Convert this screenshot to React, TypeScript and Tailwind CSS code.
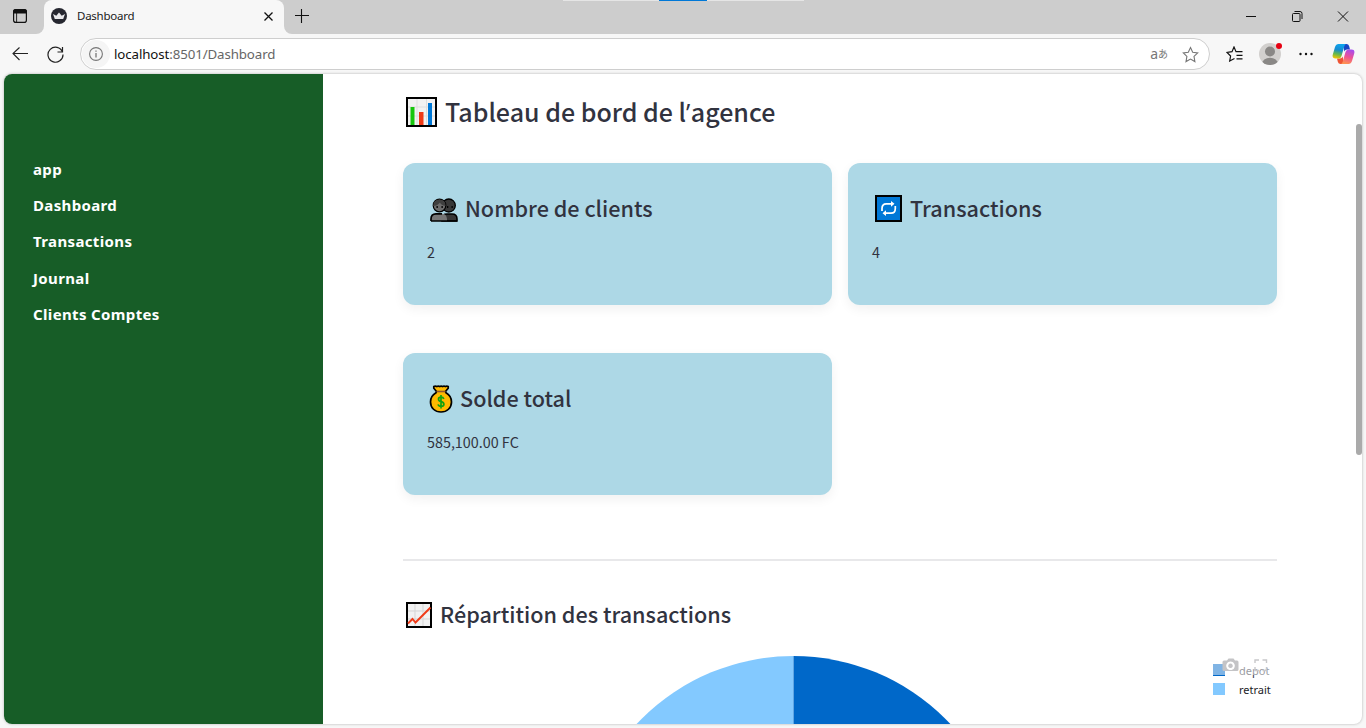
import React from "react";

const PAGES = ["app", "Dashboard", "Transactions", "Journal", "Clients Comptes"];

function BarChartEmoji() {
  return (
    <svg width="31" height="30" viewBox="0 0 31 30" className="shrink-0">
      <rect x="1" y="1" width="29" height="28" fill="#f2f2f2" stroke="#000" strokeWidth="2" />
      <path d="M11 2v26M20.500 2v26M2 10h27M2 19h27" stroke="#dedede" strokeWidth="1" />
      <path d="M4.500 10h4v18h-4z" fill="#16c60c" />
      <path d="M13 15h4.500v13h-4.500z" fill="#f03a17" />
      <path d="M22 6h4v22h-4z" fill="#0078d7" />
    </svg>
  );
}

function PeopleEmoji() {
  return (
    <svg width="28" height="24" viewBox="0 0 28 24" className="mt-[3px] shrink-0">
      <path d="M12 23v-2q0-5 5-5h5q5 0 5 5v2z" fill="#383838" stroke="#000" strokeWidth="1.600" />
      <circle cx="18.800" cy="7.500" r="6.500" fill="#383838" stroke="#000" strokeWidth="1.300" />
      <path d="M1 23v-2q0-5.200 5-5.200h6q4.500 0 5 5.200v2z" fill="#767676" />
      <path d="M1 23v-2q0-5.200 5-5.200h6M1 23h26" fill="none" stroke="#000" strokeWidth="1.700" />
      <circle cx="9.500" cy="7.500" r="6.300" fill="#6b6b6b" stroke="#000" strokeWidth="1.200" />
      <path d="M3.200 8q0-6.500 6.300-6.500t6.100 6.500Q11 7 10 4.500 7 8 3.200 8z" fill="#3f3f3f" />
      <path d="M6.500 8h1.300v2H6.500zM11.500 8h1.300v2h-1.300zM17 8h1.300v2H17zM21.500 8h1.300v2h-1.300z" fill="#000" />
    </svg>
  );
}

function RepeatEmoji() {
  return (
    <svg width="27" height="27" viewBox="0 0 27 27" className="shrink-0">
      <rect x="1" y="1" width="25" height="25" fill="#0078d7" stroke="#000" strokeWidth="2" />
      <g fill="none" stroke="#fff" strokeWidth="1.700">
        <path d="M7 16v-2.500q0-4.700 4.300-4.700H17" />
        <path d="M20.300 11v2.500q0 4.700-4.300 4.700H10" />
      </g>
      <path d="M16 6l3.500 2.800-3.500 2.900zM11 15.300L7.500 18.200l3.500 2.900z" fill="#fff" />
    </svg>
  );
}

function MoneyEmoji() {
  return (
    <svg width="24" height="28" viewBox="0 0 24 28" className="mt-[2px] shrink-0">
      <path
        d="M7.500 6.500L4.800 3.200V1.500q1.500-.7 3 0 1.500-.7 3 0 1.300-.7 2.700 0 1.500-.7 3 0 1.300-.7 2.700 0v1.700L16.500 6.500l.5 1.300Q22.500 11 22.500 17c0 6-4.500 10-10.500 10S1.500 23 1.500 17Q1.500 11 7 7.800z"
        fill="#ffb900" stroke="#000" strokeWidth="1.700"
      />
      <path d="M7.500 6.500h9" stroke="#8e562e" strokeWidth="1.600" />
      <path d="M14.800 14q-.5-1.800-2.800-1.800-2.500 0-2.500 2 0 1.700 2.600 2.400 2.800.7 2.800 2.700 0 2.100-2.800 2.100-2.500 0-3-2M12 10v13.500" fill="none" stroke="#13a10e" strokeWidth="1.700" />
    </svg>
  );
}

function TrendEmoji() {
  return (
    <svg width="26" height="26" viewBox="0 0 26 26" className="mt-[2px] shrink-0">
      <rect x="1" y="1" width="24" height="24" fill="#f2f2f2" stroke="#000" strokeWidth="2" />
      <path d="M9 2v22M17 2v22M2 9h22M2 17h22" stroke="#d5d5d5" />
      <path d="M2 21.500L6.500 17l3 3.500L24.500 5.500" fill="none" stroke="#f03a17" strokeWidth="1.900" />
    </svg>
  );
}

function CopilotLogo() {
  return (
    <svg width="23" height="22" viewBox="0 0 23 22">
      <defs>
        <linearGradient id="cpA" x1="0.500" y1="0" x2="0.300" y2="1">
          <stop offset="0" stopColor="#0ea5ee" />
          <stop offset="0.400" stopColor="#168bd0" />
          <stop offset="0.700" stopColor="#65b84c" />
          <stop offset="1" stopColor="#f5c400" />
        </linearGradient>
        <linearGradient id="cpB" x1="0.700" y1="0" x2="0.400" y2="1">
          <stop offset="0" stopColor="#a64bf0" />
          <stop offset="0.500" stopColor="#ec5197" />
          <stop offset="1" stopColor="#ff9350" />
        </linearGradient>
      </defs>
      <path d="M11 1h3.500q2 0 2.600 2L18 6.500h-3q-2 0-2.600 2z" fill="#1946c4" />
      <path d="M12 21H8.500q-2 0-2.600-2L5 15.500h3q2 0 2.600-2z" fill="#ee5434" />
      <path d="M6.500 1H14q-1.200.5-1.700 2.200L9.500 13q-.7 2.500-3 2.500H3.500Q-.2 15.500.8 11.500L3 4q1-3 3.500-3z" fill="url(#cpA)" />
      <path d="M16.500 21H9q1.200-.5 1.700-2.200L13.500 9q.7-2.500 3-2.500h3q3.700 0 2.700 4L20 18q-1 3-3.500 3z" fill="url(#cpB)" />
    </svg>
  );
}

function StarPath() {
  return <path d="M8.500 1.500l2.200 4.700 5 .7-3.700 3.500.9 5.200-4.400-2.500-4.500 2.500.9-5.200L1.300 6.900l5-.7z" />;
}

function TitleBar() {
  return (
    <header className="flex h-[34px] shrink-0 bg-[#f7f7f7]">
      <div className="flex w-11 items-start rounded-br-lg bg-[#cdcdcd] pt-[9px] pl-[13px]">
        <svg width="14" height="14" viewBox="0 0 14 14" fill="none" stroke="#111" strokeWidth="1.200">
          <rect x="0.600" y="0.600" width="12.800" height="12.800" rx="2.200" />
          <path d="M.6 4V3Q.6.600 3 .600h8q2.400 0 2.400 2.400v1z" fill="#111" />
          <path d="M3.600 4v9.500" strokeWidth="0.900" />
        </svg>
      </div>
      <div className="w-60 bg-[#cdcdcd]">
        <div className="flex h-full items-start rounded-t-lg bg-[#f7f7f7] pr-[11px] pl-[7px]">
          <svg className="mt-2" width="16" height="16" viewBox="0 0 16 16">
            <circle cx="8" cy="8" r="8" fill="#262730" />
            <path d="M2 6l3.300 1.800L8 4.500l2.700 3.300L14 6l-1.800 5H3.800z" fill="#e9e9ec" />
          </svg>
          <span className="mt-[7px] ml-[10px] flex-1 font-['Noto_Sans',sans-serif] text-[11.500px] leading-[18px] tracking-[-0.250px] text-[#1b1b1b]">Dashboard</span>
          <svg className="mt-3" width="9" height="9" viewBox="0 0 9 9" stroke="#111" strokeWidth="1.300">
            <path d="M.5.500l8 8M8.500.500l-8 8" />
          </svg>
        </div>
      </div>
      <div className="flex flex-1 items-start rounded-bl-lg bg-[#cdcdcd]">
        <svg className="mt-[9px] ml-[11px]" width="14" height="14" viewBox="0 0 14 14" stroke="#111" strokeWidth="1.100">
          <path d="M0 6.500h14M6.500 0v14" />
        </svg>
        <div className="ml-[254px] flex h-px w-[241px] bg-[#e5e5e5]">
          <div className="ml-24 h-px w-12 bg-[#0078d7]" />
        </div>
        <div className="ml-auto flex pt-[11px] pr-[17px]">
          <svg className="mr-[35px]" width="11" height="11" viewBox="0 0 11 11" stroke="#111"><path d="M0 5.500h10" /></svg>
          <svg className="mr-[34px]" width="11" height="11" viewBox="0 0 11 11" fill="none" stroke="#111">
            <rect x="0.500" y="2.500" width="7.500" height="8" rx="1" />
            <path d="M2.500.500h5.500q2 0 2 2V8" />
          </svg>
          <svg width="12" height="11" viewBox="0 0 12 11" stroke="#111"><path d="M1 .500l10 10M11 .500l-10 10" /></svg>
        </div>
      </div>
    </header>
  );
}

function AddressBar() {
  return (
    <div className="flex h-10 shrink-0 items-center bg-[#f7f7f7] pl-3">
      <svg width="16" height="14" viewBox="0 0 16 14" fill="none" stroke="#222" strokeWidth="1.100">
        <path d="M16 6.500H.8M7.500.500L1 6.500l6.500 6.500" />
      </svg>
      <svg className="ml-[19px]" width="17" height="17" viewBox="0 0 17 17" fill="none" stroke="#222" strokeWidth="1.200">
        <path d="M15.500 6A7.500 7.500 0 1 0 16 8.500M15.500 1v5H10.500" />
      </svg>
      <div className="ml-4 flex h-8 w-[1130px] items-center rounded-full border border-[#cecece] bg-white pr-[10px] pl-px">
        <div className="flex size-7 items-center justify-center rounded-full bg-[#f5f5f5]">
          <svg width="14" height="14" viewBox="0 0 14 14" fill="none" stroke="#777" strokeWidth="1.100">
            <circle cx="7" cy="7" r="6.400" />
            <path d="M7 6v4.500M7 3.400v1.300" strokeWidth="1.300" />
          </svg>
        </div>
        <span className="ml-1 font-['Noto_Sans',sans-serif] text-[13.300px] leading-5 tracking-[-0.110px] text-[#666]">
          <span className="text-[#111]">localhost</span>:8501/Dashboard
        </span>
        <span className="ml-auto flex items-center text-[#777]">
          <span className="font-['Noto_Sans',sans-serif] text-[14px] leading-4">a</span>
          <span className="font-['Noto_Sans_CJK_JP',sans-serif] text-[10px] leading-4">あ</span>
        </span>
        <svg className="ml-[14px]" width="17" height="17" viewBox="0 0 17 17" fill="none" stroke="#777" strokeWidth="1.100"><StarPath /></svg>
      </div>
      <svg className="ml-4" width="17" height="16" viewBox="0 0 17 16" fill="none" stroke="#111" strokeWidth="1.200">
        <path d="M8.500 12.500l-4.800 2.500.9-5L1 6.500l5-.8L8 1l2 4.700h6.500M10.500 9.300h6M10.500 12.800h6" />
      </svg>
      <div className="relative ml-4 size-[22px]">
        <svg width="22" height="22" viewBox="0 0 22 22">
          <defs><clipPath id="avatarClip"><circle cx="11" cy="11" r="11" /></clipPath></defs>
          <g clipPath="url(#avatarClip)">
            <rect width="22" height="22" fill="#d2d0ce" />
            <circle cx="11" cy="8.500" r="5" fill="#8a8886" />
            <ellipse cx="11" cy="21" rx="8" ry="6.300" fill="#8a8886" />
          </g>
        </svg>
        <span className="absolute top-0 right-[-1px] size-1.5 rounded-full bg-[#e60012]" />
      </div>
      <svg className="ml-[18px]" width="14" height="4" viewBox="0 0 14 4" fill="#111">
        <circle cx="1.500" cy="2" r="1.200" /><circle cx="7" cy="2" r="1.200" /><circle cx="12.500" cy="2" r="1.200" />
      </svg>
      <div className="ml-[19px]"><CopilotLogo /></div>
    </div>
  );
}

type StatCardProps = { icon: React.ReactNode; title: string; value: string; iconBox: string };

function StatCard({ icon, title, value, iconBox }: StatCardProps) {
  return (
    <section className="h-[142px] rounded-xl bg-[#add8e6] px-6 pt-[22px] shadow-[0_4px_12px_rgba(0,0,0,0.06)]">
      <h3 className={`flex h-[46px] items-center whitespace-nowrap font-['Noto_Sans_CJK_SC',sans-serif] text-[21.600px] font-medium ${iconBox}`}>
        {icon}
        <span className="leading-[30px]">{title}</span>
      </h3>
      <p className="mt-[9px] font-['Noto_Sans_CJK_SC',sans-serif] text-[14.350px] leading-6">{value}</p>
    </section>
  );
}

function PieChart() {
  return (
    <div className="mt-[24px] flex h-[70px] items-start justify-between">
      <svg className="ml-[233px]" width="318" height="70" viewBox="0 0 318 70">
        <path d="M157.500 215V0A215 215 0 0 0 157.500 430z" fill="#83c9ff" />
        <path d="M157.500 215V0A215 215 0 0 1 157.500 430z" fill="#0068c9" />
      </svg>
      <div className="relative mt-[4px] mr-[6px] flex w-[58px] flex-col font-['Noto_Sans',sans-serif] text-[11px] text-[#31333f]">
        <div className="flex h-[19px] items-center">
          <span className="size-3 bg-[#0068c9]" />
          <span className="mt-[3px] ml-[14px]">depot</span>
        </div>
        <div className="flex h-[19px] items-center text-[#1b1c26]">
          <span className="size-3 bg-[#83c9ff]" />
          <span className="mt-[3px] ml-[14px]">retrait</span>
        </div>
        <div className="absolute top-[-5px] left-0 h-5 w-[62px] bg-white/50">
          <svg width="62" height="20" viewBox="0 0 62 20">
            <path fillRule="evenodd" d="M11 5.500h3l1.500-2h5l1.500 2h2q1.500 0 1.500 1.500v7.500q0 1.500-1.500 1.500H11q-1.500 0-1.500-1.500V7q0-1.500 1.500-1.500zM17.500 6.500a4.300 4.300 0 1 0 .01 0zM17.500 8.500a2.300 2.300 0 1 1-.01 0z" fill="#c4c4c6" />
            <path d="M42 8V5h4M49.500 5h4v3M42 12v3.500h4M49.500 15.500h4V12" fill="none" stroke="#c8c8ca" strokeWidth="1.400" />
          </svg>
        </div>
      </div>
    </div>
  );
}

export default function App() {
  return (
    <div className="flex h-[728px] w-[1366px] flex-col overflow-hidden bg-[#f7f7f7]">
      <TitleBar />
      <AddressBar />
      <div className="mx-1 flex h-[650px] overflow-hidden rounded-lg bg-white shadow-[0_0_3px_rgba(0,0,0,0.280)]">
        <nav className="flex w-[319px] shrink-0 flex-col gap-[8.200px] bg-[#175d27] pt-[81px] pl-[29px] font-['Noto_Sans',sans-serif] text-[15px] font-bold text-white">
          {PAGES.map((page) => (
            <a key={page} className="h-7 leading-7 tracking-[0.360px] whitespace-nowrap">{page}</a>
          ))}
        </nav>
        <main className="flex min-w-0 flex-1 justify-between pl-20 text-[#31333f]">
          <div className="w-[874px]">
            <h2 className="flex h-[75px] items-center gap-2 pl-[3px] font-['Noto_Sans_CJK_SC',sans-serif] text-[25px] font-medium whitespace-nowrap">
              <BarChartEmoji />
              <span className="mb-[2px] h-9 leading-9">
                Tableau de bord de l<span className="font-['Open_Sans',sans-serif] leading-none tracking-[0.500px]">’</span>agence
              </span>
            </h2>
            <div className="mt-[14px] grid grid-cols-2 gap-x-4 gap-y-12">
              <StatCard icon={<PeopleEmoji />} title="Nombre de clients" value="2" iconBox="gap-[7px] pl-[3px]" />
              <StatCard icon={<RepeatEmoji />} title="Transactions" value="4" iconBox="gap-2 pl-[3px]" />
              <StatCard icon={<MoneyEmoji />} title="Solde total" value="585,100.00 FC" iconBox="gap-[7px] pl-[2px]" />
            </div>
            <hr className="mt-16 border-t-2 border-[#e8e8ea]" />
            <h3 className="mt-[35px] flex h-9 items-center gap-2 pl-[3px] font-['Noto_Sans_CJK_SC',sans-serif] text-[21.600px] font-medium whitespace-nowrap">
              <TrendEmoji />
              <span className="leading-[30px]">Répartition des transactions</span>
            </h3>
            <PieChart />
          </div>
          <div className="mt-[50px] h-[331px] w-1.5 rounded-full bg-[#aaa]" />
        </main>
      </div>
    </div>
  );
}
